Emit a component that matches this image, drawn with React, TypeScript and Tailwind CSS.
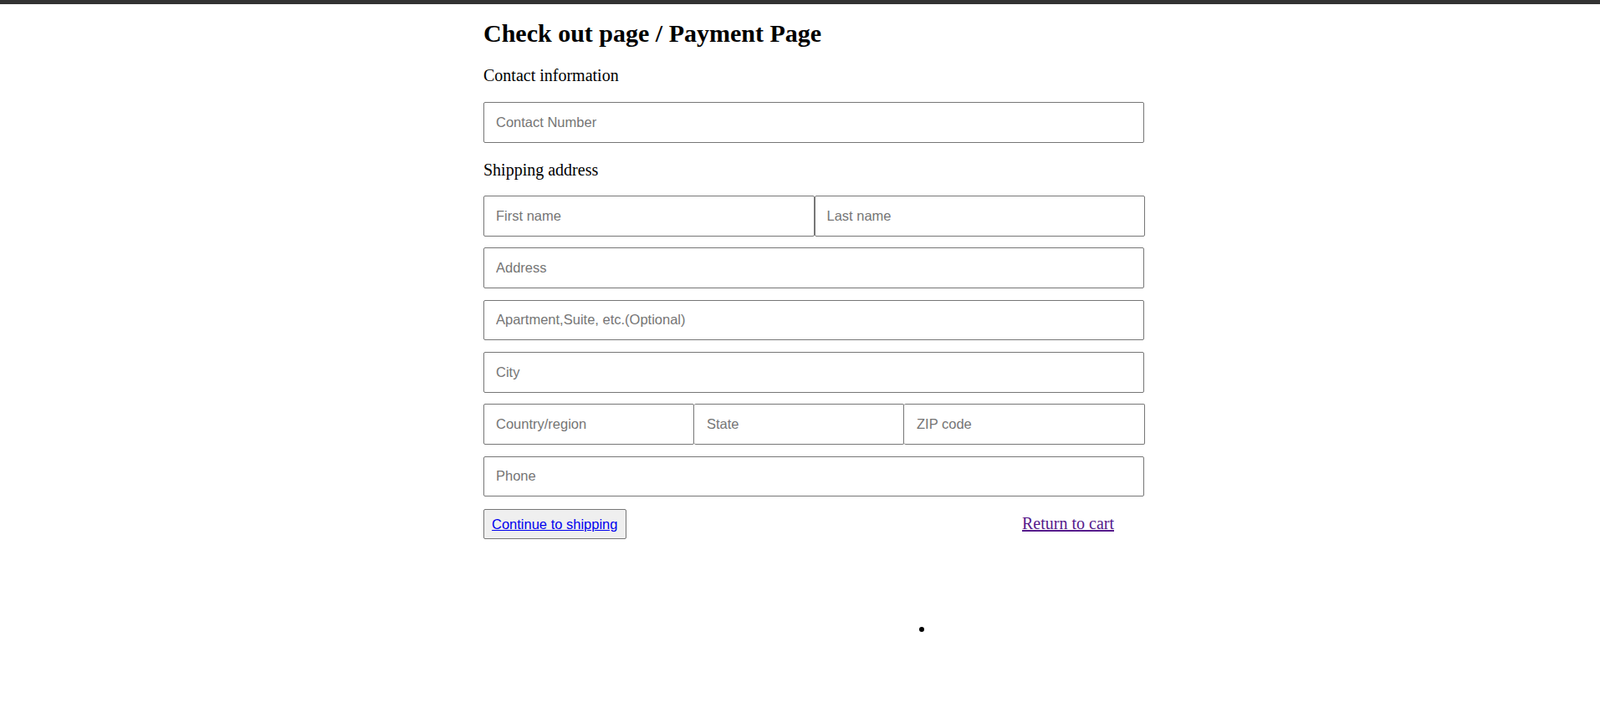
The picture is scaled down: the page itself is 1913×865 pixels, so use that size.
import React from 'react';

const field =
  "block h-[48.6px] rounded-[2px] border border-[#767676] bg-white px-[14px] font-['Liberation_Sans',Arial,sans-serif] text-[16.5px] text-black outline-none placeholder:text-[#757575]";

export default function App() {
  return (
    <main className="min-h-screen bg-white font-['Liberation_Serif','Times_New_Roman',serif] text-black">
      {/* top strip */}
      <div className="h-[5px] bg-[#333333]" />

      <div className="ml-[578px] w-[791px] pt-[18px]">
        <h1 className="text-[30px] font-bold leading-[33px]">Check out page / Payment Page</h1>

        <p className="mt-[23px] text-[20px] leading-[22px]">Contact information</p>
        <input className={`${field} mt-[21px] w-[790px]`} placeholder="Contact Number" />

        <p className="mt-[21px] text-[20px] leading-[22px]">Shipping address</p>

        <div className="mt-[20.5px] flex flex-col gap-[13.7px]">
          <div className="flex">
            <input className={`${field} w-1/2`} placeholder="First name" />
            <input className={`${field} w-1/2`} placeholder="Last name" />
          </div>
          <input className={`${field} w-[790px]`} placeholder="Address" />
          <input className={`${field} w-[790px]`} placeholder="Apartment,Suite, etc.(Optional)" />
          <input className={`${field} w-[790px]`} placeholder="City" />
          <div className="flex">
            <input className={`${field} w-[252px]`} placeholder="Country/region" />
            <input className={`${field} w-[251px] border-l-0 pl-[15px]`} placeholder="State" />
            <input className={`${field} w-[288px] border-l-0 pl-[15px]`} placeholder="ZIP code" />
          </div>
          <input className={`${field} w-[790px]`} placeholder="Phone" />
        </div>

        <div className="mt-[15px] flex items-baseline">
          <button className="h-[36px] w-[171px] rounded-[2px] border border-[#767676] bg-[#efefef] pl-[9px] text-left font-['Liberation_Sans',Arial,sans-serif] text-[16.5px] text-[#0000ee] underline">
            Continue to shipping
          </button>
          <a href="#" className="ml-auto mr-[37px] text-[20px] text-[#551a8b] underline">
            Return to cart
          </a>
        </div>

        <div className="ml-[521px] mt-[105px] h-[6px] w-[6px] rounded-full bg-black" />
      </div>
    </main>
  );
}
